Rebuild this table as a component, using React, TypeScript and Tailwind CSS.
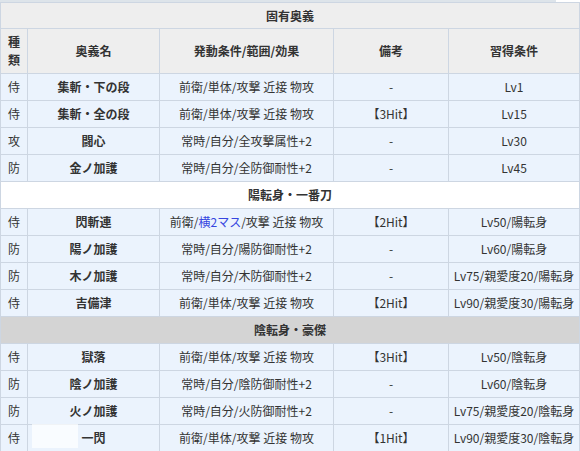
import React from 'react'

type Row = {
  kind: string
  name: string
  cond: React.ReactNode
  note: string
  req: string
}

const sections: { title: string; bg: string; rows: Row[] }[] = [
  {
    title: '陽転身・一番刀',
    bg: 'bg-white',
    rows: [
      {
        kind: '侍',
        name: '閃斬連',
        cond: (
          <>
            前衛/<span className="text-[#3646e0]">横2マス</span>/攻撃 近接 物攻
          </>
        ),
        note: '【2Hit】',
        req: 'Lv50/陽転身',
      },
      { kind: '防', name: '陽ノ加護', cond: '常時/自分/陽防御耐性+2', note: '-', req: 'Lv60/陽転身' },
      { kind: '防', name: '木ノ加護', cond: '常時/自分/木防御耐性+2', note: '-', req: 'Lv75/親愛度20/陽転身' },
      { kind: '侍', name: '吉備津', cond: '前衛/単体/攻撃 近接 物攻', note: '【2Hit】', req: 'Lv90/親愛度30/陽転身' },
    ],
  },
  {
    title: '陰転身・豪傑',
    bg: 'bg-[#d4d4d4]',
    rows: [
      { kind: '侍', name: '獄落', cond: '前衛/単体/攻撃 近接 物攻', note: '【3Hit】', req: 'Lv50/陰転身' },
      { kind: '防', name: '陰ノ加護', cond: '常時/自分/陰防御耐性+2', note: '-', req: 'Lv60/陰転身' },
      { kind: '防', name: '火ノ加護', cond: '常時/自分/火防御耐性+2', note: '-', req: 'Lv75/親愛度20/陰転身' },
      { kind: '侍', name: '一閃', cond: '前衛/単体/攻撃 近接 物攻', note: '【1Hit】', req: 'Lv90/親愛度30/陰転身' },
    ],
  },
]

const base: Row[] = [
  { kind: '侍', name: '集斬・下の段', cond: '前衛/単体/攻撃 近接 物攻', note: '-', req: 'Lv1' },
  { kind: '侍', name: '集斬・全の段', cond: '前衛/単体/攻撃 近接 物攻', note: '【3Hit】', req: 'Lv15' },
  { kind: '攻', name: '闘心', cond: '常時/自分/全攻撃属性+2', note: '-', req: 'Lv30' },
  { kind: '防', name: '金ノ加護', cond: '常時/自分/全防御耐性+2', note: '-', req: 'Lv45' },
]

const cell = 'border border-[#cdd6e2] text-center align-middle p-0'

function DataRow({ r }: { r: Row }) {
  return (
    <tr className="h-[27px] bg-[#ebf3fd]">
      <td className={cell}>{r.kind}</td>
      <td className={`${cell} font-bold`}>{r.name}</td>
      <td className={cell}>{r.cond}</td>
      <td className={cell}>{r.note}</td>
      <td className={cell}>{r.req}</td>
    </tr>
  )
}

export default function App() {
  return (
    <div
      className="relative w-[580px] h-[451px] overflow-hidden bg-white text-[12px] leading-[18px] text-[#333]"
      style={{ fontFamily: '"Noto Sans CJK JP", "Noto Sans", sans-serif' }}
    >
      <div className="h-[2px] w-[556px] bg-[#dde4ea]" />
      <table className="w-[579px] table-fixed border-collapse">
        <colgroup>
          <col className="w-[27px]" />
          <col className="w-[132px]" />
          <col className="w-[174px]" />
          <col className="w-[115px]" />
          <col className="w-[131px]" />
        </colgroup>
        <tbody>
          <tr className="h-[26px] bg-[#eeeeee]">
            <td colSpan={5} className={`${cell} font-bold`}>
              固有奥義
            </td>
          </tr>
          <tr className="h-[45px] bg-[#eeeeee] font-bold">
            <td className={cell}>
              種
              <br />
              類
            </td>
            <td className={cell}>奥義名</td>
            <td className={cell}>発動条件/範囲/効果</td>
            <td className={cell}>備考</td>
            <td className={cell}>習得条件</td>
          </tr>
          {base.map((r) => (
            <DataRow key={r.name} r={r} />
          ))}
          {sections.map((s) => (
            <React.Fragment key={s.title}>
              <tr className={`h-[27px] ${s.bg}`}>
                <td colSpan={5} className={`${cell} font-bold`}>
                  {s.title}
                </td>
              </tr>
              {s.rows.map((r) => (
                <DataRow key={r.name} r={r} />
              ))}
            </React.Fragment>
          ))}
        </tbody>
      </table>
      {/* faint watermark over the last row */}
      <div className="absolute left-[32px] top-[424px] h-[24px] w-[46px] bg-white/70" />
    </div>
  )
}
